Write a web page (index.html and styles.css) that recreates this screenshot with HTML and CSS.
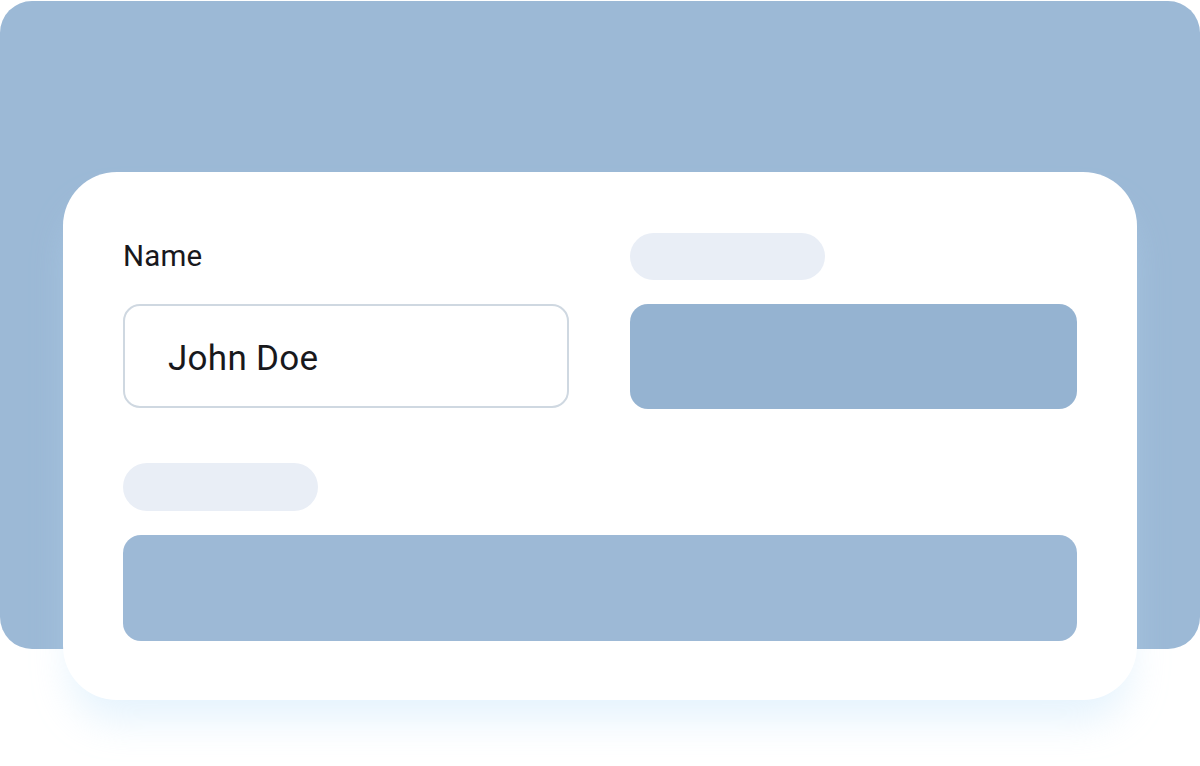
FILE: index.html
```html
<!DOCTYPE html>
<html lang="en">
<head>
<meta charset="utf-8">
<title>Form</title>
<link rel="stylesheet" href="styles.css">
</head>
<body>
<div class="panel">
  <div class="card">
    <div class="row">
      <div class="field">
        <div class="label">Name</div>
        <div class="input">John Doe</div>
      </div>
      <div class="field">
        <div class="pill"></div>
        <div class="block block-dark"></div>
      </div>
    </div>
    <div class="row single">
      <div class="field">
        <div class="pill"></div>
        <div class="block block-wide"></div>
      </div>
    </div>
  </div>
</div>
</body>
</html>
```

FILE: styles.css
```css
html, body {
  margin: 0;
  padding: 0;
  background: #ffffff;
}
body {
  width: 1200px;
  height: 766px;
  overflow: hidden;
  font-family: Roboto, "Liberation Sans", sans-serif;
}
.panel {
  box-sizing: border-box;
  width: 1200px;
  height: 648px;
  margin-top: 1px;
  background: #9cb9d6;
  border-radius: 32px;
  padding: 171px 63px 0 63px;
}
.card {
  box-sizing: border-box;
  width: 1074px;
  height: 528px;
  background: #ffffff;
  border-radius: 54px;
  padding: 61px 60px 59px 60px;
  box-shadow: 0 28px 38px -8px rgba(190, 224, 250, 0.4);
  display: flex;
  flex-direction: column;
  gap: 54px;
}
.row {
  display: grid;
  grid-template-columns: 446px 447px;
  column-gap: 61px;
}
.row.single {
  grid-template-columns: 954px;
}
.field {
  display: flex;
  flex-direction: column;
  gap: 24px;
}
.label {
  height: 47px;
  line-height: 47px;
  font-size: 29.5px;
  color: #18181c;
  letter-spacing: 0.2px;
}
.input {
  box-sizing: border-box;
  height: 104px;
  border: 2px solid #cfd8e1;
  border-radius: 17px;
  padding: 4px 0 0 43px;
  display: flex;
  align-items: center;
  font-size: 35px;
  color: #18181c;
  letter-spacing: 0.3px;
}
.pill {
  width: 195px;
  height: 47px;
  border-radius: 24px;
  background: #e9eef6;
}
.row.single .pill {
  height: 48px;
}
.block {
  height: 105px;
  border-radius: 18px;
}
.block-dark {
  background: #95b3d1;
}
.block-wide {
  height: 106px;
  background: #9db9d6;
}
```
